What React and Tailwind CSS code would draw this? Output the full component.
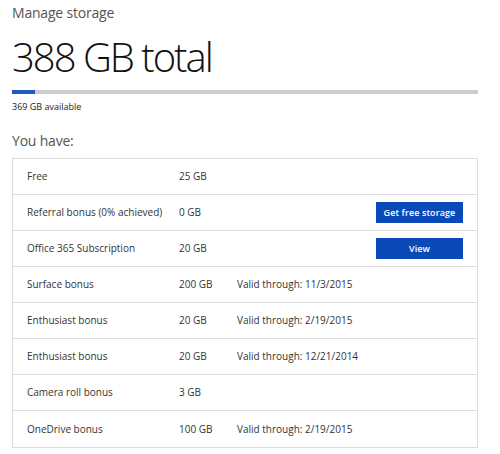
const rows = [
  { name: "Free", size: "25 GB" },
  { name: "Referral bonus (0% achieved)", size: "0 GB", action: "Get free storage" },
  { name: "Office 365 Subscription", size: "20 GB", action: "View" },
  { name: "Surface bonus", size: "200 GB", valid: "Valid through: 11/3/2015" },
  { name: "Enthusiast bonus", size: "20 GB", valid: "Valid through: 2/19/2015" },
  { name: "Enthusiast bonus", size: "20 GB", valid: "Valid through: 12/21/2014" },
  { name: "Camera roll bonus", size: "3 GB" },
  { name: "OneDrive bonus", size: "100 GB", valid: "Valid through: 2/19/2015" },
];

const App = () => {
  return (
    <div
      className="min-h-screen bg-white text-[#222] pl-3 pt-[3px]"
      style={{ fontFamily: '"Open Sans", "Noto Sans", sans-serif' }}
    >
      <div className="w-[466px]">
        <h2 className="text-[14px] leading-[20px] text-[#555] tracking-[-0.2px]">Manage storage</h2>
        <h1 className="mt-[9px] text-[40px] leading-[50px] font-light text-[#111] tracking-[-2px]">
          388 GB total
        </h1>
        <div className="mt-[8px] h-[4px] bg-[#cccccc] flex">
          <div className="w-[23px] bg-[#1b5ac2]" />
        </div>
        <p className="mt-[6px] text-[9px] leading-[14px] text-[#222]">369 GB available</p>
        <p className="mt-[17px] text-[14px] leading-[20px] text-[#555] tracking-[-0.2px]">You have:</p>
        <div className="mt-[7px] border border-[#dcdcdc]">
          {rows.map((row, i) => (
            <div
              key={i}
              className={
                "h-[36px] flex items-center pl-[14px] pr-[14px] text-[10px] text-[#333] " +
                (i < rows.length - 1 ? "border-b border-[#dcdcdc]" : "")
              }
            >
              <div className="w-[152px]">{row.name}</div>
              <div className="w-[58px]">{row.size}</div>
              <div className="flex-1">{row.valid}</div>
              {row.action && (
                <button className="w-[87px] h-[21px] bg-[#0a4ab8] text-white font-semibold text-[9px] tracking-[0.1px]">
                  {row.action}
                </button>
              )}
            </div>
          ))}
        </div>
      </div>
    </div>
  );
};

export default App;
